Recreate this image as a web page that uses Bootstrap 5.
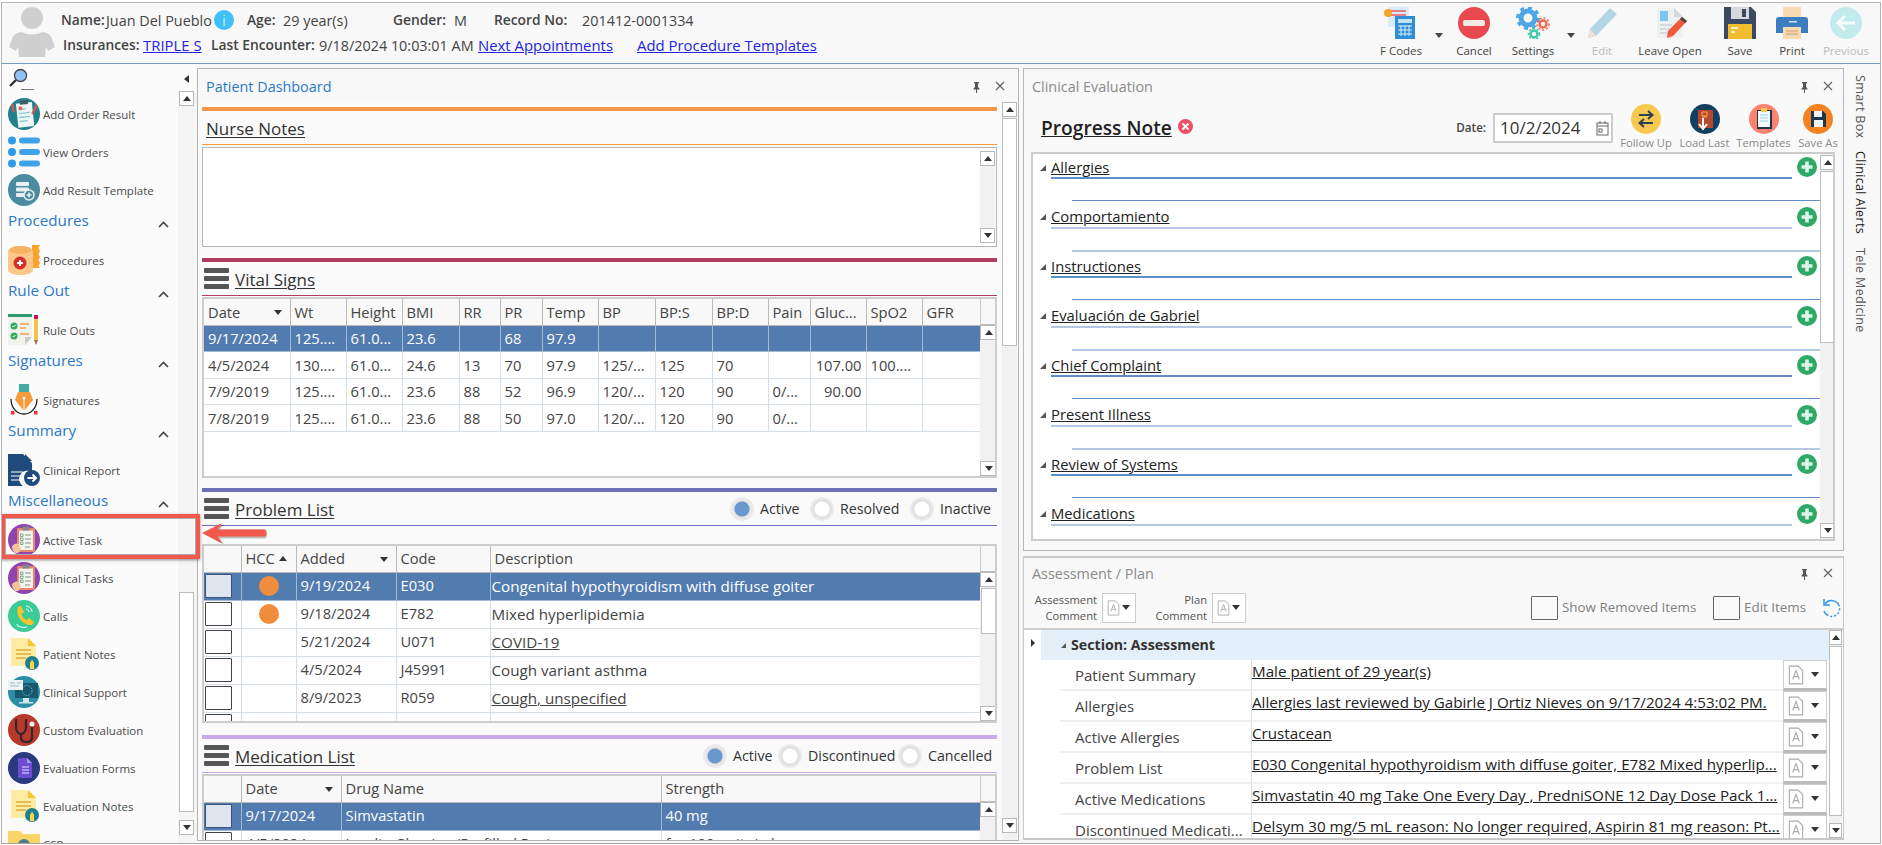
<!DOCTYPE html>
<html lang="en">
<head>
<meta charset="utf-8">
<title>Patient Dashboard</title>
<link href="https://cdn.jsdelivr.net/npm/bootstrap@5.3.0/dist/css/bootstrap.min.css" rel="stylesheet">
<style>
html,body{height:100%;overflow:hidden;background:#fff}
body{font-family:"Open Sans","Noto Sans",sans-serif;color:#444;font-size:14px;line-height:1.2}
.defs{position:absolute;width:0;height:0}
.shell{margin:2px 0 0 1px;width:1880px;height:842px;border:1px solid #b4b4b4;border-bottom-color:#a8a8a8;background:#f8f8f8;overflow:hidden}
.top-hd{height:61px;border-bottom:1px solid #6f9ed0;flex:none}
.avatar{width:48px;height:50px;margin:4px 0 0 6px;flex:none}
.pt{margin-left:5px;padding-top:5px;width:1316px;font-size:14.4px}
.pt-row{height:25px}
.pt-b{font-weight:600;color:#444;font-size:13.8px}
.pt a{color:#2424e0;font-size:14.9px}
.w45{width:45px}.w109{width:108px}.w33{width:13px}.w37{width:36px}.w110{width:110px}.w61{width:61px}.w40{width:40px}.w88{width:88px}
.r2{margin-left:2px}.w80{width:80px}.w68{width:68px}.w108{width:108px}.w159{width:159px}
.info{width:20px;height:20px;border-radius:50%;background:#3fc0f6;color:#fff;font-size:15px;line-height:20px;text-align:center;margin-top:-1px;font-weight:300}
.tools{margin-top:4px;margin-left:0}
.tb{text-align:center;font-size:11.5px;color:#444;white-space:nowrap}
.tb svg{display:block;margin:0 auto 5px;width:34px;height:32px}
.tb.off{color:#b8bcbc}
.caret-b{display:block;width:0;height:0;border-left:4px solid transparent;border-right:4px solid transparent;border-top:5px solid #444;margin:26px auto 0}
.t48{width:48px}.t28{width:28px}.t42{width:42px}.t34{width:34px}.t66{width:66px}.t50{width:50px}
.m14{margin-left:14px}.m18{margin-left:18px}.m12{margin-left:12px}.m2x{margin-left:2px}.m4x{margin-left:4px}
.main{height:779px}
.side{width:195px;flex:none;position:relative;z-index:5;background:#fbfbfb}
.side-list{width:176px;overflow:hidden;flex:none}
.srch{height:31px;padding:4px 0 0 6px;position:relative}
.srch svg{width:20px;height:20px;display:block}
.srch i{position:absolute;left:19px;top:25px;width:13px;height:1px;background:#777}
.it{height:38px;padding-left:6px;font-size:11.5px;color:#4a4a4a;white-space:nowrap}
.it span{margin-top:2px}
.it svg{width:32px;height:32px;flex:none;margin-right:3px}
.grp{height:32px;padding:1px 0 0 6px;font-size:15.2px;color:#2a78c8;line-height:21px;position:relative}
.grp svg{position:absolute;left:156px;top:12px;width:11px;height:7px}
.hl{position:absolute;left:-1px;top:450px;width:199px;height:45px;border:4px solid #f2594c;box-shadow:0 1px 3px rgba(0,0,0,.45), inset 0 0 0 1px #aaa;pointer-events:none}
.side-sc{width:19px;flex:none;background:#f5f5f5;padding-left:1px}
.side-top{height:27px;background:#fbfbfb;margin-left:-1px;padding:11px 0 0 4px}
.tri-l{display:block;width:0;height:0;border-top:4px solid transparent;border-bottom:4px solid transparent;border-right:5px solid #333;margin-left:2px}
.vs{background:#f1f1f1;flex:none}
.vs-b{width:100%;height:15px;background:#fff;border:1px solid #b9b9b9;display:flex;align-items:center;justify-content:center;flex:none}
.up{width:0;height:0;border-left:4px solid transparent;border-right:4px solid transparent;border-bottom:5px solid #333}
.dn{width:0;height:0;border-left:4px solid transparent;border-right:4px solid transparent;border-top:5px solid #333}
.thumb{background:#fff;border:1px solid #bdbdbd;margin-top:1px}
.dash{width:822px;height:773px;margin:4px 0 0 0;border:1px solid #b4b4b4;background:#fafafa;flex:none;overflow:hidden}
.p-head{height:33px;padding:9px 0 0 8px;font-size:14.4px;color:#2a78c8;position:relative;flex:none;background:#f8f8f8}
.p-head.gray{color:#8a8a8a;padding-left:8px}
.p-ctl{position:absolute;top:12px;right:13px;width:33px;height:14px}
.p-ctl.rt{right:10px}
.p-ctl svg{display:block}
.d-body{padding-left:4px}
.d-col{width:795px;padding-top:5px;flex:none;overflow:hidden;height:739px}
.d-sc{width:15px;margin-left:5px;flex:none;height:739px}
.bar{height:4px}
.head{height:34px;border-bottom:1px solid;padding-left:2px;font-size:17px;color:#333}
.head u{text-underline-offset:2px;margin-top:3px}
.ham{width:25px;height:21px;margin-right:6px;flex:none}
.c-or{background:#f79746}.b-or{border-color:#f79746}
.c-cr{background:#b13c5f}.b-cr{border-color:#b13c5f}
.c-in{background:#6f6fb7}.b-in{border-color:#6f6fb7}
.c-vi{background:#c9a9e9}.b-vi{border-color:#c9a9e9}
.notes{height:100px;margin:2px 0 11px;border:1px solid #b5b5b5;background:#fff;padding:3px 1px 3px 0}
.mini{width:15px}
.grid{border:2px solid #cdcdcd;background:#fff;overflow:hidden}
.g-main{flex:none;width:776px}
.g-sc{width:17px;flex:none}
.g-fill{height:26px;background:#f8f8f8;border-bottom:1px solid #bbb;border-left:1px solid #ccc;flex:none}
.table.tb-g{margin:0;table-layout:fixed;width:776px;border-collapse:collapse;font-size:14.7px;color:#444}
.table.tb-g>:not(caption)>*>*{padding:0 0 0 4px;border:0;border-right:1px solid #d6dee8;border-bottom:1px solid #d6dee8;background:#fff;color:#444;white-space:nowrap;overflow:hidden;font-weight:400;vertical-align:middle;box-shadow:none}
.table.tb-g>thead>*>*{background:#f8f8f8;border-right-color:#b9b9b9;border-bottom-color:#b9b9b9;height:26px;position:relative}
.table.tb-g>tbody>tr.sel>*{background:#527bb0;color:#fff;border-right-color:#a4b9d6;border-bottom-color:#a4b9d6}
.table.tb-g>:not(caption)>*>.dsc{font-size:15.2px;padding-left:1px}
.table.tb-g.vt>:not(caption)>*>*{padding-top:2px}
.vt>tbody>tr>td{height:26.5px}
.table.tb-g.pt28>tbody>tr>td{height:28px}
.cb{display:block;width:27px;height:24px;border:1px solid #444;background:#fff;margin-left:-3px;border-radius:1px}
.sel .cb{background:#dde5ee;border-color:#39537a}
.dot{display:block;width:20px;height:20px;border-radius:50%;background:#f08d3c;margin-left:13px}
.sort{position:absolute;right:8px;top:11px}
.sort-u{display:inline-block;margin:0 0 2px 4px;vertical-align:middle}
.ra{display:inline-block;font-size:14.2px;white-space:nowrap}
.radio-o{display:block;width:24px;height:24px;border-radius:50%;background:radial-gradient(circle,#fff 0 7px,#dedede 8px,#eee 12px);flex:none;margin-right:6px}
.radio-o.on{background:radial-gradient(circle,#6b97cf 0 7px,#e4e4e4 8px,#eee 12px)}
.arrow-gap{height:18px;position:relative}
.arrow-gap svg{position:absolute;left:0;top:-3px;width:66px;height:22px;overflow:visible}
.ccol{width:821px;margin:4px 0 0 4px;flex:none}
.pan{border:1px solid #b8b8b8;background:#f9f9f9;overflow:hidden}
.pan1{height:483px}
.pan2{height:284px;margin-top:5px;border-color:#c8c8c8;border-width:2px 1px}
.pn-bar{height:50px;padding:2px 0 0 17px;flex:none}
.pn-title{font-size:19.2px;font-weight:600;color:#222;margin-top:-1px}
.pn-x{width:15px;height:15px;margin-left:6px;margin-bottom:4px}
.dlab{font-size:11.6px;font-weight:600;margin:0 7px 0 0;color:#444}
.dbox.form-control{width:120px;height:30px;border:2px solid #ccc;border-radius:0;background:#fff;font-size:17px;padding:0 0 0 5px;color:#333;line-height:26px;display:flex;align-items:center;justify-content:space-between;padding-right:2px;box-shadow:none;margin-right:4px}
.dbox svg{width:13px;height:15px}
.acts{font-size:11.2px;color:#8a8a8a;text-align:center;white-space:nowrap;line-height:1;margin-top:-3px}
.acts svg{width:30px;height:30px;display:block;margin:0 auto 3px}
.a1{width:58px}.a2{width:59px}.a3{width:59px}.a4{width:50px}
.fbox{width:804px;height:389px;margin-left:7px;border:2px solid #ccc;background:#fff;overflow:hidden;flex:none}
.f-main{width:787px;flex:none;overflow:hidden}
.f-sc{width:16px;flex:none;padding:1px 0 1px 0}
.blk{height:49.5px;position:relative}
.blk-h{height:23px;padding:4px 0 0 7px;font-size:14.8px;font-weight:500;color:#222}
.tri-d{display:inline-block;width:0;height:0;border-style:solid;border-width:0 0 6px 6px;border-color:transparent transparent #555 transparent;margin-right:5px;flex:none}
.l1{margin-left:18px;width:741px}
.l2{margin:21px 0 0 39px}
.d1{height:1.5px;background:#5f8fca}
.d2{height:2px;background:#b3c8e2}
.plus{width:20px;height:20px;margin-left:4px;margin-top:3px;flex:none}
.blk-col{width:760px;flex:none}
.blk-row{width:785px}
.ctlrow{height:39px;font-size:12px;color:#7f7f7f;padding-left:7px;padding-bottom:2px;flex:none}
.cmt{text-align:right;font-size:11.2px;line-height:16px;color:#555;width:66px}
.cmt2{margin-left:7px;width:64px}
.fmt{width:34px;height:30px;border:1px solid #ccc;background:#fff;margin-left:5px;padding:0 3px;flex:none}
.fmt svg{width:15px;height:16px}
.fmt .dn{margin-left:1px}
.fmt2{margin-left:5px}
.ck{width:27px;height:24px;border:1px solid #666;background:#fafafa;flex:none;border-radius:1px;margin-right:4px}
.sri{font-size:13.4px;white-space:nowrap}
.sp1{margin-left:285px}
.rf{width:20px;height:20px;margin-left:14px}
.agrid{height:210px;border-top:2px solid #ccc;background:#fff;flex:none;overflow:hidden}
.a-l{width:17px;flex:none;padding:9px 0 0 7px}
.tri-r{display:block;width:0;height:0;border-top:4px solid transparent;border-bottom:4px solid transparent;border-left:4px solid #333}
.a-m{width:788px;flex:none;overflow:hidden}
.a-sec{height:30px;background:#e3f0f9;padding-left:20px;font-size:14.2px;font-weight:700;color:#333;flex:none}
.a-sec .tri-d{border-width:0 0 5px 5px;margin-right:5px}
.a-r{height:31px;padding-left:19px;flex:none}
.a-lab{width:192px;height:31px;padding:6px 0 0 15px;font-size:15px;border-bottom:2px solid #eee;border-right:1px solid #d8dfe8;color:#444;white-space:nowrap;overflow:hidden;flex:none}
.a-val{width:531px;height:31px;padding-top:2px;font-size:15.2px;color:#222;white-space:nowrap;overflow:hidden;text-decoration:underline;flex:none;border-bottom:2px solid #f2f2f2}
.a-btn{width:44px;height:31px;border:1px solid #ccc;border-bottom:3px solid #bbb;flex:none;padding:0 7px 0 3px;background:#fff}
.a-btn svg{width:18px;height:20px}
.a-sc{width:13px;flex:none}
.vtabs{width:35px;flex:none;padding:11px 3px 0 0;color:#555;font-size:12.6px;letter-spacing:.3px}
.vtabs span{writing-mode:vertical-rl;display:block;white-space:nowrap;height:auto;margin:0 auto 13px;line-height:18px}
.vtabs .act{color:#222}
u{text-decoration-thickness:1px}
</style>
</head>
<body>
<svg class="defs" aria-hidden="true">
<symbol id="pin" viewBox="0 0 9 12"><path d="M2 1h5v1l-1 .5V6l1.500 1.500V8.500H5V12H4V8.500H1.500V7.500L3 6V2.500L2 2z" fill="#555"/></symbol>
<symbol id="xx" viewBox="0 0 10 10"><path d="M1 1l8 8M9 1l-8 8" stroke="#666" stroke-width="1.200" fill="none"/></symbol>
<symbol id="ham" viewBox="0 0 25 21"><rect width="25" height="5" y="0" rx="1" fill="#555"/><rect width="25" height="5" y="8" rx="1" fill="#555"/><rect width="25" height="5" y="16" rx="1" fill="#555"/></symbol>
<symbol id="chev" viewBox="0 0 11 7"><path d="M1 6l4.500-4.500L10 6" fill="none" stroke="#444" stroke-width="1.600"/></symbol>
<symbol id="doc-a" viewBox="0 0 16 18"><path d="M2 1h8l4 4v12H2z" fill="#fff" stroke="#aaa"/><path d="M5 13l3-8 3 8M6 10.500h4" fill="none" stroke="#aaa"/></symbol>
<symbol id="plus" viewBox="0 0 20 20"><circle cx="10" cy="10" r="10" fill="#2ea965"/><path d="M10 4.500v11M4.500 10h11" stroke="#dff3e6" stroke-width="3.600"/></symbol>
<symbol id="i-order" viewBox="0 0 32 32"><circle cx="16" cy="16" r="16" fill="#25808c"/><g transform="rotate(-6 16 16)"><rect x="9" y="5" width="16" height="24" fill="#ecf7f6"/><rect x="13" y="2.500" width="8" height="4" fill="#3e5f6a"/><path d="M11 11h7M11 15h11M11 19h11M11 23h8" stroke="#8fc8d0" stroke-width="1.300"/><circle cx="13" cy="10" r="2" fill="#e9635c"/></g><path d="M4 6l2 8M29 7l-5 9" stroke="#e4574f" stroke-width="2"/></symbol>
<symbol id="i-list" viewBox="0 0 32 32"><g fill="#2f9bea"><circle cx="4" cy="4.500" r="4"/><circle cx="4" cy="16" r="4"/><circle cx="4" cy="27.500" r="4"/></g><g fill="#3fa3ea"><rect x="11" y="1.500" width="21" height="6" rx="3"/><rect x="11" y="13" width="21" height="6" rx="3"/><rect x="11" y="24.500" width="21" height="6" rx="3"/></g></symbol>
<symbol id="i-tpl" viewBox="0 0 32 32"><circle cx="16" cy="16" r="16" fill="#4a8b9f"/><g fill="#e8f0f3"><rect x="8" y="8" width="13" height="4" rx="1"/><rect x="8" y="13.500" width="13" height="4" rx="1"/><rect x="8" y="19" width="9" height="4" rx="1"/></g><circle cx="21" cy="21" r="5" fill="#4a8b9f" stroke="#e8f0f3" stroke-width="1.500"/><path d="M21 18.500v5M18.500 21h5" stroke="#e8f0f3" stroke-width="1.500"/></symbol>
<symbol id="i-proc" viewBox="0 0 32 30"><path d="M26 0h6l-1.500 3 1.500 3-1.500 3 1.500 3-1.500 3 1.500 3-1.500 3 1.500 2H24V0z" fill="#f9a22c"/><path d="M0 7c0-4 6-6 12-6s13 2 13 6v18c0 3-6 5-12.500 5S0 28 0 25z" fill="#fbc88a"/><ellipse cx="12.500" cy="5" rx="11" ry="4" fill="#f7b163"/><circle cx="12" cy="18" r="6.500" fill="#d72e2a"/><path d="M12 15v6M9 18h6" stroke="#fff" stroke-width="2"/></symbol>
<symbol id="i-rule" viewBox="0 0 32 32"><path d="M0 1h24v22l-7 8H0z" fill="#f1f1ee"/><rect width="24" height="3" y="0" fill="#2e9c70"/><path d="M24 23h-7v8z" fill="#c9c9c4"/><circle cx="6" cy="12" r="3.500" fill="#35ac62"/><circle cx="6" cy="22" r="3.500" fill="#35ac62"/><path d="M4.500 12l1 1 2-2M4.500 22l1 1 2-2" stroke="#fff" fill="none"/><path d="M12 10h9M12 14h6M12 20h9" stroke="#f2a04a" stroke-width="1.300"/><rect x="26" y="1" width="4" height="25" fill="#f3c34e"/><rect x="26" y="1" width="4" height="4" fill="#c2185b"/><path d="M26 26h4l-2 5z" fill="#8d6e4d"/></symbol>
<symbol id="i-sign" viewBox="0 0 32 32"><rect x="11" y="0" width="10" height="8" fill="#45a9a5"/><path d="M10 8h12l3 8-9 11-9-11z" fill="#f79a3e"/><path d="M16 27V14" stroke="#fff"/><circle cx="16" cy="14" r="1.300" fill="#fff"/><path d="M3 15c0 9 6 15 13 15s13-6 13-15" fill="none" stroke="#222" stroke-width="1.300"/><rect x="3" y="27" width="3.500" height="3.500" fill="#e33"/><rect x="26" y="27" width="3.500" height="3.500" fill="#e33"/></symbol>
<symbol id="i-report" viewBox="0 0 32 32"><path d="M0 0h15l9 9v9a8 8 0 00-9 14H0z" fill="#1f4a7c"/><path d="M17 0l7 7h-7z" fill="#1f4a7c"/><path d="M3 18h12M3 22h10M3 26h9" stroke="#fff" stroke-width="1.200"/><circle cx="24" cy="24" r="8" fill="#1f4a7c"/><path d="M19.500 24h8M24.500 20.500l3.500 3.500-3.500 3.500" fill="none" stroke="#fff" stroke-width="2"/></symbol>
<symbol id="i-task" viewBox="0 0 32 32"><circle cx="16" cy="16" r="16" fill="#8f45ad"/><rect x="9" y="4" width="18" height="24" rx="1" fill="#e9856c"/><rect x="11" y="6.500" width="14" height="19.500" fill="#f5f3ee"/><rect x="14.500" y="2.500" width="7" height="4" fill="#888"/><path d="M17 11h6M17 15h6M17 19h6M17 23h5" stroke="#7a9a88" stroke-width="1.200"/><path d="M12.500 10h2.500v2.500h-2.500zM12.500 14h2.500v2.500h-2.500zM12.500 18h2.500v2.500h-2.500z" fill="none" stroke="#5a9a70" stroke-width=".8"/><path d="M4 22c3-3 5-3 7-2l2 6-3 3H7c-2-2-3-4-3-7z" fill="#f2c49a"/></symbol>
<symbol id="i-call" viewBox="0 0 32 32"><circle cx="16" cy="16" r="16" fill="#3bcb97"/><path d="M10 7l3-1 3 6-2.500 2c1 3 3 5 5 6l2.500-2 5 4-2 3c-8 1-17-8-14-18z" fill="#f6c52d"/><path d="M18 6c3 0 6 3 6 6M18 9c2 0 3 2 3 3M9 24c0 3 6 4 10 3" fill="none" stroke="#fff" stroke-width="1"/></symbol>
<symbol id="i-note" viewBox="0 0 32 32"><path d="M3 0h17l8 8v20H3z" fill="#fdeda2"/><path d="M20 0l8 8h-8z" fill="#f5c92e"/><path d="M8 12h15M8 16h15M8 20h10" stroke="#dca93a" stroke-width="1.300"/><circle cx="24" cy="25" r="7" fill="#1f7f8c"/><path d="M22 31v-6l2-3.500 2 3.500v6z" fill="#f8d54a"/></symbol>
<symbol id="i-support" viewBox="0 0 32 32"><circle cx="16" cy="16" r="16" fill="#2b8ea4"/><rect x="7" y="7" width="23" height="15" fill="#17586c"/><circle cx="19" cy="14.500" r="5" fill="none" stroke="#58b8cc" stroke-dasharray="1.500 1"/><rect x="0" y="4" width="15" height="10" fill="#eef3f2"/><path d="M2 7h5M2 10h9M9 7h4" stroke="#8fbfc9"/><rect x="15" y="22" width="6" height="4" fill="#cfe6ea"/><rect x="11" y="26" width="14" height="1.500" fill="#cfe6ea"/></symbol>
<symbol id="i-eval" viewBox="0 0 32 32"><circle cx="16" cy="16" r="16" fill="#b8382b"/><path d="M8 5v8c0 5 3 7 5 7s5-2 5-7V5M13 20v4c0 3 3 4 6 4s5-2 5-5V13" fill="none" stroke="#2b2b2b" stroke-width="2.200"/><circle cx="24" cy="10" r="2.500" fill="#eee"/></symbol>
<symbol id="i-forms" viewBox="0 0 32 32"><circle cx="16" cy="16" r="16" fill="#2a3a81"/><path d="M10 6h9l5 5v15H10z" fill="#6c4dd0"/><path d="M19 6l5 5h-5z" fill="#a99aea"/><path d="M14 15h7M14 18h7M14 21h7" stroke="#e7e2fa" stroke-width="1.200"/></symbol>
<symbol id="i-folder" viewBox="0 0 32 32"><path d="M0 3h12l3 3h17v24H0z" fill="#f9d467"/><circle cx="16" cy="17" r="6" fill="#4d7d8a"/></symbol>
</svg>

<div class="shell d-flex flex-column">
  <header class="top-hd d-flex">
    <svg class="avatar" viewBox="0 0 48 50"><ellipse cx="24" cy="11" rx="11" ry="11" fill="#cfcfcf"/><path d="M14 25c-5 0-9 3-10 7L1 40l7 4 2-4 1 10h26l1-10 2 4 7-4-3-8c-1-4-5-7-10-7-3 3-17 3-20 0z" fill="#cfcfcf"/></svg>
    <div class="pt flex-shrink-0">
      <div class="pt-row d-flex align-items-center text-nowrap">
        <span class="pt-b w45">Name:</span><span class="w109">Juan Del Pueblo</span><span class="info flex-shrink-0">i</span><span class="w33"></span><span class="pt-b w37">Age:</span><span class="w110">29 year(s)</span><span class="pt-b w61">Gender:</span><span class="w40">M</span><span class="pt-b w88">Record No:</span><span>201412-0001334</span>
      </div>
      <div class="pt-row r2 d-flex align-items-center text-nowrap">
        <span class="pt-b w80">Insurances:</span><span class="w68"><a href="#">TRIPLE S</a></span><span class="pt-b w108">Last Encounter:</span><span class="w159">9/18/2024 10:03:01 AM</span><span class="w159"><a href="#">Next Appointments</a></span><span><a href="#">Add Procedure Templates</a></span>
      </div>
    </div>
    <div class="tools d-flex">
      <div class="tb t48"><svg viewBox="0 0 34 32"><rect x="4" y="0" width="21" height="20" fill="#dbe9f8"/><path d="M6 4h16M6 8h16" stroke="#e77b8c" stroke-width="2"/><rect x="11" y="9" width="20" height="23" fill="#2f8fd6"/><rect x="14" y="12" width="14" height="4" fill="#bfe3f7"/><path d="M14 19h14M14 23h14M14 27h14M17 18v11M21 18v11M25 18v11" stroke="#d6eefa"/><circle cx="4" cy="6" r="4" fill="#f4a62a"/></svg>F Codes</div>
      <div class="t28"><span class="caret-b"></span></div>
      <div class="tb t42"><svg viewBox="0 0 34 32"><circle cx="17" cy="16" r="16" fill="#e9484f"/><rect x="6" y="13" width="22" height="6" rx="2" fill="#f6e8e3"/></svg>Cancel</div>
      <div class="tb t48 m14"><svg viewBox="0 0 34 32"><circle cx="12" cy="11" r="7" fill="none" stroke="#4da6e6" stroke-width="5"/><circle cx="12" cy="11" r="10.500" fill="none" stroke="#4da6e6" stroke-width="3" stroke-dasharray="4 4.200"/><circle cx="27" cy="17" r="3.500" fill="none" stroke="#f2674c" stroke-width="2.500"/><circle cx="27" cy="17" r="6" fill="none" stroke="#f2674c" stroke-width="1.500" stroke-dasharray="2 2"/><circle cx="18" cy="27" r="3.500" fill="none" stroke="#3dc8a8" stroke-width="2.500"/><circle cx="18" cy="27" r="5.500" fill="none" stroke="#3dc8a8" stroke-width="1.500" stroke-dasharray="2 2"/></svg>Settings</div>
      <div class="t28"><span class="caret-b"></span></div>
      <div class="tb t34 off"><svg viewBox="0 0 34 32"><path d="M25 1l7 6-21 22-8 2 2-9z" fill="#b4d5e6"/><path d="M5 22l6 7-8 2z" fill="#f2dfd6"/></svg>Edit</div>
      <div class="tb t66 m18"><svg viewBox="0 0 34 32"><path d="M4 1h17l9 9v21H4z" fill="#eef0f2"/><path d="M21 1l9 9h-9z" fill="#d4d8dc"/><rect x="7" y="4" width="8" height="10" fill="#7cc6f2"/><path d="M7 18h12M7 22h10M7 26h8" stroke="#ccd2d8" stroke-width="1.500"/><path d="M29 10l5 4-14 15-6 2 1-7z" fill="#ee5a3a"/><path d="M29 10l5 4-2 2-5-4z" fill="#444"/></svg>Leave Open</div>
      <div class="tb t50 m12"><svg viewBox="0 0 34 32"><path d="M1 0h27l5 5v27H1z" fill="#3b4a63"/><rect x="8" y="0" width="18" height="12" fill="#d5d8dd"/><rect x="19" y="2" width="4" height="8" fill="#3b4a63"/><rect x="5" y="17" width="24" height="15" fill="#f0bd2f"/><path d="M8 21h7M8 25h4" stroke="#fff" stroke-width="1.500"/></svg>Save</div>
      <div class="tb t50 m2x"><svg viewBox="0 0 34 32"><path d="M8 0h18v12H8z" fill="#f7d9b4"/><path d="M1 13c0-2 1-3 3-3h26c2 0 3 1 3 3v13H1z" fill="#3c7dc2"/><rect x="8" y="20" width="18" height="12" fill="#f7d9b4"/><path d="M11 24h12M11 27h12" stroke="#d79a5e"/><rect x="14" y="14" width="8" height="1.500" fill="#cfe2f3"/></svg>Print</div>
      <div class="tb t50 m4x off"><svg viewBox="0 0 34 32"><circle cx="17" cy="16" r="16" fill="#c3eaed"/><path d="M26 16H10M16 9l-7 7 7 7" fill="none" stroke="#f4fbfb" stroke-width="3"/></svg>Previous</div>
    </div>
  </header>

  <div class="main d-flex">
    <aside class="side d-flex">
      <div class="side-list">
        <div class="srch"><svg viewBox="0 0 20 20"><circle cx="12.500" cy="7.500" r="6" fill="#8fc2f5" stroke="#444" stroke-width="1.300"/><path d="M8 12l-6 6" stroke="#333" stroke-width="2.400"/></svg><i></i></div>
        <div class="it d-flex align-items-center"><svg><use href="#i-order"/></svg><span>Add Order Result</span></div>
        <div class="it d-flex align-items-center"><svg><use href="#i-list"/></svg><span>View Orders</span></div>
        <div class="it d-flex align-items-center"><svg><use href="#i-tpl"/></svg><span>Add Result Template</span></div>
        <div class="grp">Procedures<svg><use href="#chev"/></svg></div>
        <div class="it d-flex align-items-center"><svg><use href="#i-proc"/></svg><span>Procedures</span></div>
        <div class="grp">Rule Out<svg><use href="#chev"/></svg></div>
        <div class="it d-flex align-items-center"><svg><use href="#i-rule"/></svg><span>Rule Outs</span></div>
        <div class="grp">Signatures<svg><use href="#chev"/></svg></div>
        <div class="it d-flex align-items-center"><svg><use href="#i-sign"/></svg><span>Signatures</span></div>
        <div class="grp">Summary<svg><use href="#chev"/></svg></div>
        <div class="it d-flex align-items-center"><svg><use href="#i-report"/></svg><span>Clinical Report</span></div>
        <div class="grp">Miscellaneous<svg><use href="#chev"/></svg></div>
        <div class="it d-flex align-items-center"><svg><use href="#i-task"/></svg><span>Active Task</span></div>
        <div class="it d-flex align-items-center"><svg><use href="#i-task"/></svg><span>Clinical Tasks</span></div>
        <div class="it d-flex align-items-center"><svg><use href="#i-call"/></svg><span>Calls</span></div>
        <div class="it d-flex align-items-center"><svg><use href="#i-note"/></svg><span>Patient Notes</span></div>
        <div class="it d-flex align-items-center"><svg><use href="#i-support"/></svg><span>Clinical Support</span></div>
        <div class="it d-flex align-items-center"><svg><use href="#i-eval"/></svg><span>Custom Evaluation</span></div>
        <div class="it d-flex align-items-center"><svg><use href="#i-forms"/></svg><span>Evaluation Forms</span></div>
        <div class="it d-flex align-items-center"><svg><use href="#i-note"/></svg><span>Evaluation Notes</span></div>
        <div class="it d-flex align-items-center"><svg><use href="#i-folder"/></svg><span>CSP</span></div>
      </div>
      <div class="side-sc d-flex flex-column">
        <div class="side-top"><span class="tri-l"></span></div>
        <div class="vs-b mini"><span class="up"></span></div>
        <div class="flex-grow-1"></div>
        <div class="thumb mini" style="height:220px"></div>
        <div class="vs-b mini mt-2 mb-2"><span class="dn"></span></div>
      </div>
      <div class="hl"></div>
    </aside>

    <section class="dash d-flex flex-column">
      <div class="p-head">Patient Dashboard
        <div class="p-ctl d-flex justify-content-between"><svg width="9" height="12"><use href="#pin"/></svg><svg width="10" height="10"><use href="#xx"/></svg></div>
      </div>
      <div class="d-body d-flex">
        <div class="d-col">
          <div class="bar c-or"></div>
          <div class="head b-or d-flex align-items-center ps-1"><u>Nurse Notes</u></div>
          <div class="notes d-flex justify-content-end">
            <div class="vs mini d-flex flex-column justify-content-between"><div class="vs-b"><span class="up"></span></div><div class="vs-b"><span class="dn"></span></div></div>
          </div>

          <div class="bar c-cr"></div>
          <div class="head b-cr d-flex align-items-center"><svg class="ham"><use href="#ham"/></svg><u>Vital Signs</u></div>
          <div class="grid d-flex" style="height:181px;margin-top:1px">
            <div class="g-main">
              <table class="table tb-g vt">
                <colgroup><col style="width:86px"><col style="width:56px"><col style="width:56px"><col style="width:57px"><col style="width:41px"><col style="width:42px"><col style="width:56px"><col style="width:57px"><col style="width:57px"><col style="width:56px"><col style="width:42px"><col style="width:56px"><col style="width:56px"><col style="width:58px"></colgroup>
                <thead><tr><th>Date<span class="dn sort d-block"></span></th><th>Wt</th><th>Height</th><th>BMI</th><th>RR</th><th>PR</th><th>Temp</th><th>BP</th><th>BP:S</th><th>BP:D</th><th>Pain</th><th>Gluc...</th><th>SpO2</th><th>GFR</th></tr></thead>
                <tbody>
                  <tr class="sel"><td>9/17/2024</td><td>125....</td><td>61.0...</td><td>23.6</td><td></td><td>68</td><td>97.9</td><td></td><td></td><td></td><td></td><td></td><td></td><td></td></tr>
                  <tr><td>4/5/2024</td><td>130....</td><td>61.0...</td><td>24.6</td><td>13</td><td>70</td><td>97.9</td><td>125/...</td><td>125</td><td>70</td><td></td><td class="text-end pe-1">107.00</td><td>100....</td><td></td></tr>
                  <tr><td>7/9/2019</td><td>125....</td><td>61.0...</td><td>23.6</td><td>88</td><td>52</td><td>96.9</td><td>120/...</td><td>120</td><td>90</td><td>0/...</td><td class="text-end pe-1">90.00</td><td></td><td></td></tr>
                  <tr><td>7/8/2019</td><td>125....</td><td>61.0...</td><td>23.6</td><td>88</td><td>50</td><td>97.0</td><td>120/...</td><td>120</td><td>90</td><td>0/...</td><td></td><td></td><td></td></tr>
                </tbody>
              </table>
            </div>
            <div class="g-sc d-flex flex-column"><div class="g-fill"></div><div class="vs flex-grow-1 d-flex flex-column justify-content-between p-0"><div class="vs-b"><span class="up"></span></div><div class="vs-b"><span class="dn"></span></div></div></div>
          </div>

          <div class="bar c-in" style="margin-top:10px"></div>
          <div class="head b-in d-flex align-items-center"><svg class="ham"><use href="#ham"/></svg><u>Problem List</u>
            <div class="ms-auto d-flex align-items-center ra"><span class="radio-o on"></span><span style="width:50px">Active</span><span class="radio-o"></span><span style="width:70px">Resolved</span><span class="radio-o"></span><span style="width:57px">Inactive</span></div>
          </div>
          <div class="arrow-gap"><svg viewBox="0 0 66 22"><path d="M1 10L21 0l-4 5.500h45c3 0 3 9 0 9H17l4 6z" fill="#000" opacity=".25" transform="translate(1 1)"/><path d="M0 10L20 0l-4 6.500h46c3 0 3 7 0 7H16l4 7z" fill="#f2594c"/></svg></div>
          <div class="grid d-flex" style="height:179px">
            <div class="g-main">
              <table class="table tb-g pt28">
                <colgroup><col style="width:37px"><col style="width:55px"><col style="width:100px"><col style="width:94px"><col style="width:490px"></colgroup>
                <thead><tr><th></th><th>HCC<span class="up sort-u"></span></th><th>Added<span class="dn sort d-block"></span></th><th>Code</th><th>Description</th></tr></thead>
                <tbody>
                  <tr class="sel"><td><span class="cb"></span></td><td><span class="dot"></span></td><td>9/19/2024</td><td>E030</td><td class="dsc">Congenital hypothyroidism with diffuse goiter</td></tr>
                  <tr><td><span class="cb"></span></td><td><span class="dot"></span></td><td>9/18/2024</td><td>E782</td><td class="dsc">Mixed hyperlipidemia</td></tr>
                  <tr><td><span class="cb"></span></td><td></td><td>5/21/2024</td><td>U071</td><td class="dsc"><u>COVID-19</u></td></tr>
                  <tr><td><span class="cb"></span></td><td></td><td>4/5/2024</td><td>J45991</td><td class="dsc">Cough variant asthma</td></tr>
                  <tr><td><span class="cb"></span></td><td></td><td>8/9/2023</td><td>R059</td><td class="dsc"><u>Cough, unspecified</u></td></tr>
                  <tr><td><span class="cb"></span></td><td></td><td>5/11/2023</td><td>M6281</td><td class="dsc">Muscle weakness (generalized)</td></tr>
                </tbody>
              </table>
            </div>
            <div class="g-sc d-flex flex-column"><div class="g-fill"></div><div class="vs flex-grow-1 d-flex flex-column p-0"><div class="vs-b"><span class="up"></span></div><div class="thumb mini" style="height:46px;margin-left:1px"></div><div class="flex-grow-1"></div><div class="vs-b"><span class="dn"></span></div></div></div>
          </div>

          <div class="bar c-vi" style="margin-top:12px"></div>
          <div class="head b-vi d-flex align-items-center"><svg class="ham"><use href="#ham"/></svg><u>Medication List</u>
            <div class="ms-auto d-flex align-items-center ra"><span class="radio-o on"></span><span style="width:45px">Active</span><span class="radio-o"></span><span style="width:90px">Discontinued</span><span class="radio-o"></span><span style="width:69px">Cancelled</span></div>
          </div>
          <div class="grid d-flex" style="height:80px;margin-top:1px">
            <div class="g-main">
              <table class="table tb-g pt28">
                <colgroup><col style="width:37px"><col style="width:100px"><col style="width:320px"><col style="width:319px"></colgroup>
                <thead><tr><th></th><th>Date<span class="dn sort d-block"></span></th><th>Drug Name</th><th>Strength</th></tr></thead>
                <tbody>
                  <tr class="sel"><td><span class="cb"></span></td><td>9/17/2024</td><td>Simvastatin</td><td>40 mg</td></tr>
                  <tr><td><span class="cb"></span></td><td>4/5/2024</td><td>Insulin Glargine (Prefilled Pen)</td><td>for 100 units/ml</td></tr>
                </tbody>
              </table>
            </div>
            <div class="g-sc d-flex flex-column"><div class="g-fill"></div><div class="vs flex-grow-1 p-0"><div class="vs-b"><span class="up"></span></div></div></div>
          </div>
        </div>
        <div class="d-sc vs d-flex flex-column">
          <div class="vs-b"><span class="up"></span></div>
          <div class="thumb" style="height:228px"></div>
          <div class="flex-grow-1"></div>
          <div class="vs-b mb-2"><span class="dn"></span></div>
        </div>
      </div>
    </section>

    <div class="ccol d-flex flex-column">
      <section class="pan pan1 d-flex flex-column">
        <div class="p-head gray">Clinical Evaluation
          <div class="p-ctl rt d-flex justify-content-between"><svg width="9" height="12"><use href="#pin"/></svg><svg width="10" height="10"><use href="#xx"/></svg></div>
        </div>
        <div class="pn-bar d-flex align-items-center">
          <u class="pn-title">Progress Note</u>
          <svg class="pn-x" viewBox="0 0 15 15"><circle cx="7.500" cy="7.500" r="7.500" fill="#ee4f68"/><path d="M4.500 4.500l6 6M10.500 4.500l-6 6" stroke="#fff" stroke-width="2"/></svg>
          <span class="dlab ms-auto">Date:</span>
          <div class="dbox form-control">10/2/2024<svg viewBox="0 0 13 15"><rect x="1" y="2" width="11" height="12" fill="none" stroke="#666"/><path d="M1 5h11" stroke="#666"/><rect x="3" y="8" width="3" height="3" fill="none" stroke="#666"/><path d="M4 0v3M9 0v3" stroke="#666"/></svg></div>
          <div class="acts a1"><svg viewBox="0 0 30 30"><circle cx="15" cy="15" r="15" fill="#f7c94f"/><path d="M8 11h13M17 7l4.500 4-4.500 4M22 19H9M13 15l-4.500 4 4.500 4" fill="none" stroke="#2e3f55" stroke-width="2"/></svg>Follow Up</div>
          <div class="acts a2"><svg viewBox="0 0 30 30"><circle cx="15" cy="15" r="15" fill="#123f5f"/><path d="M8 6h15v18H8z" fill="#b9472f"/><path d="M12 8h5v4h-5zM12 13h5" stroke="#f4b04a" fill="none"/><path d="M13 14v10M9 20l4 5 4-5" fill="none" stroke="#fff" stroke-width="2"/></svg>Load Last</div>
          <div class="acts a3"><svg viewBox="0 0 30 30"><circle cx="15" cy="15" r="15" fill="#f9836f"/><rect x="8" y="6" width="15" height="19" fill="#21354b"/><rect x="9" y="7" width="12" height="16" fill="#f2f8fc"/><rect x="12" y="4" width="6" height="4" fill="#f7c94f"/><path d="M11 11h8M11 14h8M11 17h8" stroke="#9fd0ec"/></svg>Templates</div>
          <div class="acts a4"><svg viewBox="0 0 30 30"><circle cx="15" cy="15" r="15" fill="#f58220"/><path d="M8 7h12l3 3v13H8z" fill="#1f3550"/><rect x="11" y="7" width="8" height="6" fill="#eef2f6"/><rect x="11" y="16" width="9" height="7" fill="#eef2f6"/></svg>Save As</div>
        </div>
        <div class="fbox d-flex">
          <div class="f-main">
            <div class="blk"><div class="blk-row d-flex"><div class="blk-col"><div class="blk-h d-flex align-items-center"><span class="tri-d"></span><u>Allergies</u></div><div class="l1 d1"></div></div><svg class="plus"><use href="#plus"/></svg></div><div class="l2 d1"></div></div>
            <div class="blk"><div class="blk-row d-flex"><div class="blk-col"><div class="blk-h d-flex align-items-center"><span class="tri-d"></span><u>Comportamiento</u></div><div class="l1 d2"></div></div><svg class="plus"><use href="#plus"/></svg></div><div class="l2 d2"></div></div>
            <div class="blk"><div class="blk-row d-flex"><div class="blk-col"><div class="blk-h d-flex align-items-center"><span class="tri-d"></span><u>Instructiones</u></div><div class="l1 d1"></div></div><svg class="plus"><use href="#plus"/></svg></div><div class="l2 d1"></div></div>
            <div class="blk"><div class="blk-row d-flex"><div class="blk-col"><div class="blk-h d-flex align-items-center"><span class="tri-d"></span><u>Evaluación de Gabriel</u></div><div class="l1 d2"></div></div><svg class="plus"><use href="#plus"/></svg></div><div class="l2 d2"></div></div>
            <div class="blk"><div class="blk-row d-flex"><div class="blk-col"><div class="blk-h d-flex align-items-center"><span class="tri-d"></span><u>Chief Complaint</u></div><div class="l1 d1"></div></div><svg class="plus"><use href="#plus"/></svg></div><div class="l2 d1"></div></div>
            <div class="blk"><div class="blk-row d-flex"><div class="blk-col"><div class="blk-h d-flex align-items-center"><span class="tri-d"></span><u>Present Illness</u></div><div class="l1 d2"></div></div><svg class="plus"><use href="#plus"/></svg></div><div class="l2 d2"></div></div>
            <div class="blk"><div class="blk-row d-flex"><div class="blk-col"><div class="blk-h d-flex align-items-center"><span class="tri-d"></span><u>Review of Systems</u></div><div class="l1 d1"></div></div><svg class="plus"><use href="#plus"/></svg></div><div class="l2 d1"></div></div>
            <div class="blk"><div class="blk-row d-flex"><div class="blk-col"><div class="blk-h d-flex align-items-center"><span class="tri-d"></span><u>Medications</u></div><div class="l1 d2"></div></div><svg class="plus"><use href="#plus"/></svg></div></div>
          </div>
          <div class="f-sc vs d-flex flex-column">
            <div class="vs-b"><span class="up"></span></div>
            <div class="thumb" style="height:172px"></div>
            <div class="flex-grow-1"></div>
            <div class="vs-b"><span class="dn"></span></div>
          </div>
        </div>
      </section>

      <section class="pan pan2 d-flex flex-column">
        <div class="p-head gray" style="height:31px;padding-top:7px">Assessment / Plan
          <div class="p-ctl rt d-flex justify-content-between" style="top:10px"><svg width="9" height="12"><use href="#pin"/></svg><svg width="10" height="10"><use href="#xx"/></svg></div>
        </div>
        <div class="ctlrow d-flex align-items-center">
          <div class="cmt">Assessment<br>Comment</div>
          <div class="fmt d-flex align-items-center"><svg><use href="#doc-a"/></svg><span class="dn"></span></div>
          <div class="cmt cmt2">Plan<br>Comment</div>
          <div class="fmt fmt2 d-flex align-items-center"><svg><use href="#doc-a"/></svg><span class="dn"></span></div>
          <span class="ck sp1"></span><span class="sri" style="width:151px">Show Removed Items</span>
          <span class="ck"></span><span class="sri" style="width:64px">Edit Items</span>
          <svg class="rf" viewBox="0 0 20 20"><path d="M3 6a8 8 0 1 1 -1 7" fill="none" stroke="#2f9be0" stroke-width="1.500" stroke-dasharray="16 0 2 2 2 2 2 2 2 2 2 2"/><path d="M2 1v6h6" fill="none" stroke="#2f9be0" stroke-width="1.500"/></svg>
        </div>
        <div class="agrid d-flex">
          <div class="a-l"><span class="tri-r"></span></div>
          <div class="a-m d-flex flex-column">
            <div class="a-sec d-flex align-items-center"><span class="tri-d"></span>Section: Assessment</div>
            <div class="a-r d-flex"><div class="a-lab">Patient Summary</div><div class="a-val">Male patient of 29 year(s)</div><div class="a-btn d-flex align-items-center justify-content-between"><svg><use href="#doc-a"/></svg><span class="dn"></span></div></div>
            <div class="a-r d-flex"><div class="a-lab">Allergies</div><div class="a-val">Allergies last reviewed by Gabirle J Ortiz Nieves on 9/17/2024 4:53:02 PM.</div><div class="a-btn d-flex align-items-center justify-content-between"><svg><use href="#doc-a"/></svg><span class="dn"></span></div></div>
            <div class="a-r d-flex"><div class="a-lab">Active Allergies</div><div class="a-val">Crustacean</div><div class="a-btn d-flex align-items-center justify-content-between"><svg><use href="#doc-a"/></svg><span class="dn"></span></div></div>
            <div class="a-r d-flex"><div class="a-lab">Problem List</div><div class="a-val">E030 Congenital hypothyroidism with diffuse goiter, E782 Mixed hyperlip...</div><div class="a-btn d-flex align-items-center justify-content-between"><svg><use href="#doc-a"/></svg><span class="dn"></span></div></div>
            <div class="a-r d-flex"><div class="a-lab">Active Medications</div><div class="a-val">Simvastatin 40 mg Take One Every Day , PredniSONE 12 Day Dose Pack 1...</div><div class="a-btn d-flex align-items-center justify-content-between"><svg><use href="#doc-a"/></svg><span class="dn"></span></div></div>
            <div class="a-r d-flex"><div class="a-lab">Discontinued Medicati...</div><div class="a-val">Delsym 30 mg/5 mL reason: No longer required, Aspirin 81 mg reason: Pt...</div><div class="a-btn d-flex align-items-center justify-content-between"><svg><use href="#doc-a"/></svg><span class="dn"></span></div></div>
          </div>
          <div class="a-sc vs d-flex flex-column">
            <div class="vs-b"><span class="up"></span></div>
            <div class="thumb" style="height:170px"></div>
            <div class="flex-grow-1"></div>
            <div class="vs-b"><span class="dn"></span></div>
          </div>
        </div>
      </section>
    </div>

    <nav class="vtabs"><span>Smart Box</span><span class="act">Clinical Alerts</span><span>Tele Medicine</span></nav>
  </div>
</div>
<script src="https://cdn.jsdelivr.net/npm/bootstrap@5.3.0/dist/js/bootstrap.bundle.min.js"></script>
</body>
</html>
